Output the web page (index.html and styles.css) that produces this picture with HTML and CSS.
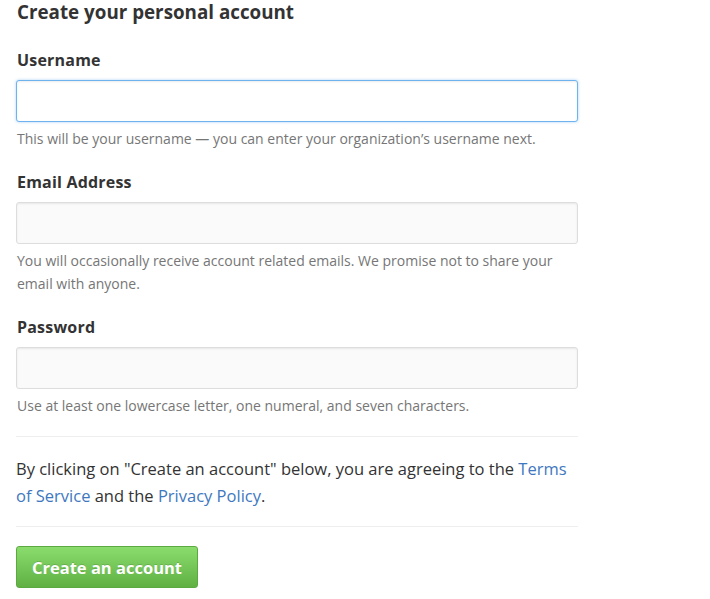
FILE: index.html
```html
<!DOCTYPE html>
<html lang="en">
<head>
<meta charset="utf-8">
<title>Create your personal account</title>
<link rel="stylesheet" href="styles.css">
</head>
<body>
<form class="signup">
  <h2 class="title">Create your personal account</h2>
  <div class="group">
    <label class="label" for="username">Username</label>
    <input class="field field-focus" id="username" type="text">
    <p class="note">This will be your username — you can enter your organization’s username next.</p>
  </div>
  <div class="group">
    <label class="label" for="email">Email Address</label>
    <input class="field" id="email" type="text">
    <p class="note">You will occasionally receive account related emails. We promise not to share your email with anyone.</p>
  </div>
  <div class="group">
    <label class="label" for="password">Password</label>
    <input class="field" id="password" type="password">
    <p class="note">Use at least one lowercase letter, one numeral, and seven characters.</p>
  </div>
  <hr class="rule">
  <p class="terms">By clicking on "Create an account" below, you are agreeing to the <a href="#">Terms of Service</a> and the <a href="#">Privacy Policy</a>.</p>
  <hr class="rule rule-bottom">
  <button class="btn" type="button">Create an account</button>
</form>
</body>
</html>
```
FILE: styles.css
```css
html, body {
  margin: 0;
  padding: 0;
  background: #fff;
}
body {
  font-family: "Open Sans", "Noto Sans", sans-serif;
  color: #333;
}
.signup {
  width: 562px;
  margin-left: 16px;
  display: flex;
  flex-direction: column;
}
.title {
  margin: 0;
  font-size: 18.8px;
  line-height: 24px;
  font-weight: 700;
  color: #333;
  padding-left: 1px;
}
.group {
  display: flex;
  flex-direction: column;
}
.title + .group {
  margin-top: 26px;
}
.group + .group {
  margin-top: 22px;
}
.label {
  display: block;
  font-size: 16px;
  line-height: 20px;
  font-weight: 700;
  letter-spacing: 0.2px;
  padding-left: 1px;
  margin-bottom: 10px;
}
.field {
  box-sizing: border-box;
  width: 562px;
  height: 42px;
  margin: 0;
  padding: 6px 8px;
  border: 1px solid #ddd;
  border-radius: 3px;
  background: #fafafa;
  box-shadow: inset 0 1px 2px rgba(0,0,0,0.075);
  font-size: 15px;
  outline: none;
}
.field-focus {
  background: #fff;
  border-color: #6fb3ee;
  box-shadow: inset 0 1px 2px rgba(0,0,0,0.075), 0 0 3px rgba(81,167,232,0.5);
}
.note {
  margin: 5px 0 0;
  font-size: 14px;
  line-height: 23px;
  color: #767676;
  padding-left: 1px;
}
.rule {
  width: 100%;
  height: 0;
  margin: 19px 0 0;
  border: 0;
  border-top: 1px solid #eee;
}
.terms {
  margin: 18px 0 0;
  font-size: 16.5px;
  line-height: 27px;
  color: #333;
}
.terms a {
  color: #4078c0;
  text-decoration: none;
}
.rule-bottom {
  margin-top: 17px;
}
.btn {
  align-self: flex-start;
  margin-top: 19px;
  width: 182px;
  height: 42px;
  padding: 0;
  border: 1px solid #5ca941;
  border-radius: 3px;
  background: linear-gradient(#8add6d, #60b044);
  color: #fff;
  font-family: "Open Sans", "Noto Sans", sans-serif;
  font-size: 16.5px;
  font-weight: 700;
  text-shadow: 0 -1px 0 rgba(0,0,0,0.15);
  cursor: pointer;
}
```
